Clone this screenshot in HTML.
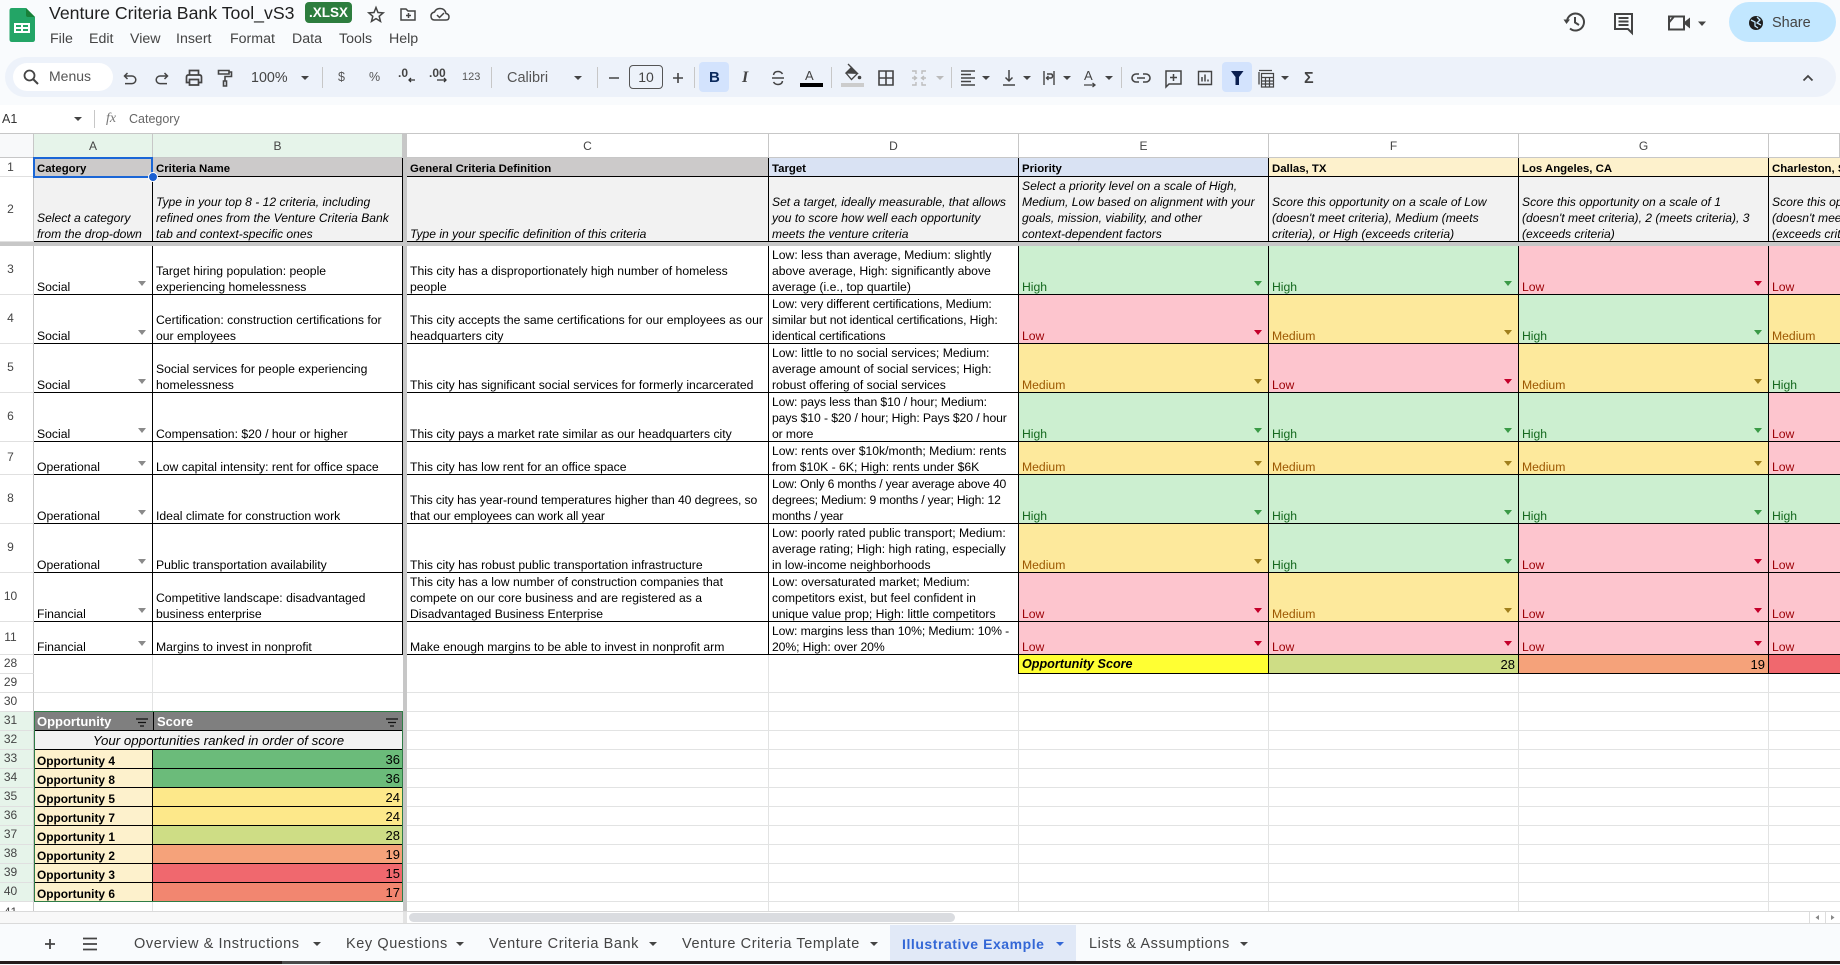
<!DOCTYPE html>
<html lang="en"><head><meta charset="utf-8"><title>Venture Criteria Bank Tool_vS3</title>
<style>
*{box-sizing:border-box}
html,body{margin:0;padding:0;width:1840px;height:964px;overflow:hidden;background:#f9fbfd;font-family:"Liberation Sans",Arial,sans-serif;color:#000}
.x{position:absolute;white-space:nowrap;color:#444}
.band{position:absolute;left:5px;top:57px;width:1831px;height:40px;background:#edf2fa;border-radius:20px}
.pill{position:absolute;left:13px;top:63px;width:100px;height:28px;background:#fff;border-radius:14px}
.hl{position:absolute;top:62px;width:30px;height:30px;background:#d3e3fd;border-radius:4px}
.sep{position:absolute;top:67px;width:1px;height:21px;background:#c7c7c7}
.t{position:absolute;width:0;height:0;border-left:4px solid transparent;border-right:4px solid transparent;border-top:4px solid #444}
.fbar{position:absolute;left:0;top:105px;width:1840px;height:28px;background:#fff}
.hd{position:absolute;top:133px;height:25px;background:#fff;border-top:1px solid #c7c7c7;border-bottom:1px solid #c7c7c7;border-right:1px solid #c7c7c7;text-align:center;font-size:12px;line-height:25px;color:#444}
.n{position:absolute;left:0;width:34px;background:#fff;border-right:1px solid #c7c7c7;border-bottom:1px solid #e0e0e0;font-size:12px;color:#444;overflow:hidden}
.n span{position:absolute;left:0;width:21px;text-align:center;top:50%;margin-top:-9px;line-height:16px}
.n.ng{background:#e6f4ea}
.r{position:absolute;left:34px;width:1806px;border-bottom:1px solid #000;overflow:hidden}
.c{position:absolute;top:0;bottom:0;border-right:1px solid #000;overflow:hidden;white-space:nowrap;font-size:12.2px;line-height:16px;background:#fff}
.c span{position:absolute;left:3px;bottom:-1px}
.a{left:0;width:119px}.b{left:119px;width:250px}.cc{left:373px;width:362px}.d{left:735px;width:250px}.e{left:985px;width:250px}.f{left:1235px;width:250px}.g{left:1485px;width:250px}.h{left:1735px;width:71px;border-right:0}
.c i{position:absolute;right:6px;bottom:8px;width:0;height:0;border-left:4px solid transparent;border-right:4px solid transparent;border-top:5px solid #8a8a8a}
.hi{background:#ccefd0;color:#15691f}.hi i{border-top-color:#3a9a46}
.lo{background:#fdc5ce;color:#9c0006}.lo i{border-top-color:#c4002a}
.me{background:#fde99c;color:#9c5700}.me i{border-top-color:#a07f1c}
.c.h i{display:none}
.h1 .c{background:#cccaca;font-weight:bold;font-size:11.4px}
.h1 .d,.h1 .e{background:#d9e2f3}
.h1 .f,.h1 .g,.h1 .h{background:#fdf1cc}
.h2 .c{background:#f2f2f2;font-style:italic;font-size:12.1px}
.gl{position:absolute;top:655px;width:1px;height:256px;background:#e2e3e3}
.grid{position:absolute;left:0;top:674px;width:1840px;height:237px;background:repeating-linear-gradient(to bottom,transparent 0,transparent 18px,#e2e3e3 18px,#e2e3e3 19px)}
.rk{position:absolute;left:34px;width:369px;height:19px;border-bottom:1px solid #000}
.rk div{position:absolute;top:0;bottom:0;white-space:nowrap}
.op{left:0;width:119px;background:#fdf1cc;border-right:1px solid #000;font-weight:bold;font-size:11.9px;line-height:16px}
.op span{position:absolute;left:3px;bottom:-1px}
.sc{left:119px;width:250px;text-align:right;font-size:13px;line-height:19px;padding-right:3px}
.tab{position:absolute;top:924px;font-size:14.5px;letter-spacing:.58px;line-height:41px;color:#444;white-space:nowrap}
</style></head><body>

<!-- title / menu -->
<div class="x" style="left:49px;top:2px;font-size:17.7px;line-height:22px;color:#1f1f1f">Venture Criteria Bank Tool_vS3</div>
<div class="x" style="left:305px;top:2px;width:47px;height:21px;background:#2d7d3e;border-radius:4px;color:#fff;font-size:13.5px;font-weight:bold;line-height:21px;text-align:center">.XLSX</div>
<div class="x" style="left:50px;top:30px;font-size:14.2px;line-height:18px">File</div>
<div class="x" style="left:89px;top:30px;font-size:14.2px;line-height:18px">Edit</div>
<div class="x" style="left:130px;top:30px;font-size:14.2px;line-height:18px">View</div>
<div class="x" style="left:176px;top:30px;font-size:14.2px;line-height:18px">Insert</div>
<div class="x" style="left:230px;top:30px;font-size:14.2px;line-height:18px">Format</div>
<div class="x" style="left:292px;top:30px;font-size:14.2px;line-height:18px">Data</div>
<div class="x" style="left:339px;top:30px;font-size:14.2px;line-height:18px">Tools</div>
<div class="x" style="left:389px;top:30px;font-size:14.2px;line-height:18px">Help</div>
<div class="x" style="left:1729px;top:2px;width:107px;height:40px;background:#c2e7ff;border-radius:20px"></div>
<div class="x" style="left:1772px;top:14px;font-size:14.5px;line-height:18px">Share</div>

<!-- toolbar -->
<div class="band"></div><div class="pill"></div>
<div class="hl" style="left:699px"></div><div class="hl" style="left:1222px"></div>
<div class="x" style="left:49px;top:68px;font-size:14px;line-height:16px;color:#555">Menus</div>
<div class="x" style="left:251px;top:70px;font-size:14.3px;line-height:17px">100%</div>
<div class="t" style="left:301px;top:76px"></div>
<div class="sep" style="left:322px"></div>
<div class="x" style="left:338px;top:69px;font-size:12.5px;line-height:16px;color:#555">$</div>
<div class="x" style="left:369px;top:69px;font-size:12.5px;line-height:16px;color:#555">%</div>
<div class="x" style="left:398px;top:66px;font-size:12px;font-weight:bold;line-height:14px">.0</div>
<div class="x" style="left:429px;top:66px;font-size:12px;font-weight:bold;line-height:14px">.00</div>
<div class="x" style="left:462px;top:70px;font-size:11px;line-height:14px;color:#555">123</div>
<div class="sep" style="left:491px"></div>
<div class="x" style="left:507px;top:69px;font-size:14.5px;line-height:18px;color:#555">Calibri</div>
<div class="t" style="left:574px;top:76px"></div>
<div class="sep" style="left:597px"></div>
<div class="x" style="left:629px;top:65px;width:34px;height:24px;border:1px solid #555;border-radius:4px;text-align:center;font-size:14px;line-height:22px">10</div>
<div class="sep" style="left:694px"></div>
<div class="sep" style="left:831px"></div>
<div class="x" style="left:841px;top:83px;width:23px;height:4px;background:#ccc"></div>
<div class="x" style="left:800px;top:83px;width:23px;height:4px;background:#000"></div>
<div class="x" style="left:805px;top:68px;font-size:13px;line-height:15px">A</div>
<div class="x" style="left:709px;top:69px;font-size:15px;font-weight:bold;line-height:17px;color:#0b2a5e">B</div>
<div class="x" style="left:742px;top:69px;font-size:16px;font-weight:bold;font-style:italic;line-height:17px;font-family:'Liberation Serif',serif">I</div>
<div class="sep" style="left:951px"></div>
<div class="sep" style="left:1121px"></div>
<div class="t" style="left:936px;top:76px;border-top-color:#bbb"></div>
<div class="t" style="left:982px;top:76px"></div>
<div class="t" style="left:1023px;top:76px"></div>
<div class="t" style="left:1063px;top:76px"></div>
<div class="t" style="left:1105px;top:76px"></div>
<div class="t" style="left:1281px;top:76px"></div>
<div class="x" style="left:1084px;top:69px;font-size:13px;line-height:14px">A</div>
<div class="x" style="left:1304px;top:70px;font-size:16px;font-weight:bold;line-height:18px">Σ</div>

<!-- formula bar -->
<div class="fbar"></div>
<div class="x" style="left:2px;top:111px;font-size:12.5px;line-height:16px;color:#333">A1</div>
<div class="t" style="left:74px;top:117px"></div>
<div class="x" style="left:94px;top:110px;width:1px;height:18px;background:#c7c7c7"></div>
<div class="x" style="left:106px;top:110px;font-size:14px;font-style:italic;font-family:'Liberation Serif',serif;line-height:18px;color:#777">fx</div>
<div class="x" style="left:129px;top:111px;font-size:12.5px;line-height:16px;color:#666">Category</div>

<!-- headers -->
<div class="hd" style="left:0;width:34px;background:#f8f9fa"></div>
<div class="hd" style="left:34px;width:119px;background:#e6f4ea">A</div>
<div class="hd" style="left:153px;width:250px;background:#e6f4ea">B</div>
<div class="hd" style="left:407px;width:362px">C</div>
<div class="hd" style="left:769px;width:250px">D</div>
<div class="hd" style="left:1019px;width:250px">E</div>
<div class="hd" style="left:1269px;width:250px">F</div>
<div class="hd" style="left:1519px;width:250px">G</div>
<div class="hd" style="left:1769px;width:71px"></div>
<div class="hd" style="left:403px;width:4px;background:#c7c7c7"></div>

<!-- row numbers -->
<div class="n" style="top:158px;height:19px"><span style="margin-top:-8px">1</span></div>
<div class="n" style="top:177px;height:65px"><span style="margin-top:-8px">2</span></div>
<div class="n" style="top:246px;height:49px"><span>3</span></div>
<div class="n" style="top:295px;height:49px"><span>4</span></div>
<div class="n" style="top:344px;height:49px"><span>5</span></div>
<div class="n" style="top:393px;height:49px"><span>6</span></div>
<div class="n" style="top:442px;height:33px"><span>7</span></div>
<div class="n" style="top:475px;height:49px"><span>8</span></div>
<div class="n" style="top:524px;height:49px"><span>9</span></div>
<div class="n" style="top:573px;height:49px"><span>10</span></div>
<div class="n" style="top:622px;height:33px"><span>11</span></div>
<div class="n" style="top:655px;height:19px"><span>28</span></div>
<div class="n" style="top:674px;height:19px"><span>29</span></div>
<div class="n" style="top:693px;height:19px"><span>30</span></div>
<div class="n ng" style="top:712px;height:19px"><span>31</span></div>
<div class="n ng" style="top:731px;height:19px"><span>32</span></div>
<div class="n ng" style="top:750px;height:19px"><span>33</span></div>
<div class="n ng" style="top:769px;height:19px"><span>34</span></div>
<div class="n ng" style="top:788px;height:19px"><span>35</span></div>
<div class="n ng" style="top:807px;height:19px"><span>36</span></div>
<div class="n ng" style="top:826px;height:19px"><span>37</span></div>
<div class="n ng" style="top:845px;height:19px"><span>38</span></div>
<div class="n ng" style="top:864px;height:19px"><span>39</span></div>
<div class="n ng" style="top:883px;height:19px"><span>40</span></div>
<div class="n" style="top:902px;height:9px;border-bottom:0"><span style="margin-top:-3px">41</span></div>

<!-- empty grid -->
<div style="position:absolute;left:34px;top:655px;width:1806px;height:256px;background:#fff"></div>
<div class="grid" style="left:34px;width:1806px"></div>
<div class="gl" style="left:152px"></div><div class="gl" style="left:768px"></div><div class="gl" style="left:1018px"></div><div class="gl" style="left:1268px"></div><div class="gl" style="left:1518px"></div><div class="gl" style="left:1768px"></div>

<!-- data -->
<div class="r h1" style="top:158px;height:19px">
<div class="c a"><span>Category</span></div><div class="c b"><span>Criteria Name</span></div><div class="c cc"><span>General Criteria Definition</span></div><div class="c d"><span>Target</span></div><div class="c e"><span>Priority</span></div><div class="c f"><span>Dallas, TX</span></div><div class="c g"><span>Los Angeles, CA</span></div><div class="c h"><span>Charleston, SC</span></div></div>
<div class="r h2" style="top:177px;height:65px">
<div class="c a"><span>Select a category<br>from the drop-down</span></div>
<div class="c b"><span>Type in your top 8 - 12 criteria, including<br>refined ones from the Venture Criteria Bank<br>tab and context-specific ones</span></div>
<div class="c cc"><span>Type in your specific definition of this criteria</span></div>
<div class="c d"><span>Set a target, ideally measurable, that allows<br>you to score how well each opportunity<br>meets the venture criteria</span></div>
<div class="c e"><span>Select a priority level on a scale of High,<br>Medium, Low based on alignment with your<br>goals, mission, viability, and other<br>context-dependent factors</span></div>
<div class="c f"><span>Score this opportunity on a scale of Low<br>(doesn't meet criteria), Medium (meets<br>criteria), or High (exceeds criteria)</span></div>
<div class="c g"><span>Score this opportunity on a scale of 1<br>(doesn't meet criteria), 2 (meets criteria), 3<br>(exceeds criteria)</span></div>
<div class="c h"><span>Score this opportunity on a scale of 1<br>(doesn't meet criteria), 2 (meets criteria), 3<br>(exceeds criteria)</span></div></div>

<div class="r" style="top:246px;height:49px">
<div class="c a"><span>Social</span><i></i></div><div class="c b"><span>Target hiring population: people<br>experiencing homelessness</span></div>
<div class="c cc"><span>This city has a disproportionately high number of homeless<br>people</span></div>
<div class="c d"><span>Low: less than average, Medium: slightly<br>above average, High: significantly above<br>average (i.e., top quartile)</span></div>
<div class="c e hi"><span>High</span><i></i></div><div class="c f hi"><span>High</span><i></i></div><div class="c g lo"><span>Low</span><i></i></div><div class="c h lo"><span>Low</span><i></i></div></div>

<div class="r" style="top:295px;height:49px">
<div class="c a"><span>Social</span><i></i></div><div class="c b"><span>Certification: construction certifications for<br>our employees</span></div>
<div class="c cc"><span>This city accepts the same certifications for our employees as our<br>headquarters city</span></div>
<div class="c d"><span style="letter-spacing:-.1px">Low: very different certifications, Medium:<br>similar but not identical certifications, High:<br>identical certifications</span></div>
<div class="c e lo"><span>Low</span><i></i></div><div class="c f me"><span>Medium</span><i></i></div><div class="c g hi"><span>High</span><i></i></div><div class="c h me"><span>Medium</span><i></i></div></div>

<div class="r" style="top:344px;height:49px">
<div class="c a"><span>Social</span><i></i></div><div class="c b"><span>Social services for people experiencing<br>homelessness</span></div>
<div class="c cc"><span>This city has significant social services for formerly incarcerated</span></div>
<div class="c d"><span>Low: little to no social services; Medium:<br>average amount of social services; High:<br>robust offering of social services</span></div>
<div class="c e me"><span>Medium</span><i></i></div><div class="c f lo"><span>Low</span><i></i></div><div class="c g me"><span>Medium</span><i></i></div><div class="c h hi"><span>High</span><i></i></div></div>

<div class="r" style="top:393px;height:49px">
<div class="c a"><span>Social</span><i></i></div><div class="c b"><span>Compensation: $20 / hour or higher</span></div>
<div class="c cc"><span>This city pays a market rate similar as our headquarters city</span></div>
<div class="c d"><span style="letter-spacing:-.1px">Low: pays less than $10 / hour; Medium:<br>pays $10 - $20 / hour; High: Pays $20 / hour<br>or more</span></div>
<div class="c e hi"><span>High</span><i></i></div><div class="c f hi"><span>High</span><i></i></div><div class="c g hi"><span>High</span><i></i></div><div class="c h lo"><span>Low</span><i></i></div></div>

<div class="r" style="top:442px;height:33px">
<div class="c a"><span>Operational</span><i></i></div><div class="c b"><span>Low capital intensity: rent for office space</span></div>
<div class="c cc"><span>This city has low rent for an office space</span></div>
<div class="c d"><span>Low: rents over $10k/month; Medium: rents<br>from $10K - 6K; High: rents under $6K</span></div>
<div class="c e me"><span>Medium</span><i></i></div><div class="c f me"><span>Medium</span><i></i></div><div class="c g me"><span>Medium</span><i></i></div><div class="c h lo"><span>Low</span><i></i></div></div>

<div class="r" style="top:475px;height:49px">
<div class="c a"><span>Operational</span><i></i></div><div class="c b"><span>Ideal climate for construction work</span></div>
<div class="c cc"><span style="letter-spacing:-.1px">This city has year-round temperatures higher than 40 degrees, so<br>that our employees can work all year</span></div>
<div class="c d"><span style="letter-spacing:-.2px">Low: Only 6 months / year average above 40<br>degrees; Medium: 9 months / year; High: 12<br>months / year</span></div>
<div class="c e hi"><span>High</span><i></i></div><div class="c f hi"><span>High</span><i></i></div><div class="c g hi"><span>High</span><i></i></div><div class="c h hi"><span>High</span><i></i></div></div>

<div class="r" style="top:524px;height:49px">
<div class="c a"><span>Operational</span><i></i></div><div class="c b"><span>Public transportation availability</span></div>
<div class="c cc"><span>This city has robust public transportation infrastructure</span></div>
<div class="c d"><span>Low: poorly rated public transport; Medium:<br>average rating; High: high rating, especially<br>in low-income neighborhoods</span></div>
<div class="c e me"><span>Medium</span><i></i></div><div class="c f hi"><span>High</span><i></i></div><div class="c g lo"><span>Low</span><i></i></div><div class="c h lo"><span>Low</span><i></i></div></div>

<div class="r" style="top:573px;height:49px">
<div class="c a"><span>Financial</span><i></i></div><div class="c b"><span>Competitive landscape: disadvantaged<br>business enterprise</span></div>
<div class="c cc"><span>This city has a low number of construction companies that<br>compete on our core business and are registered as a<br>Disadvantaged Business Enterprise</span></div>
<div class="c d"><span>Low: oversaturated market; Medium:<br>competitors exist, but feel confident in<br>unique value prop; High: little competitors</span></div>
<div class="c e lo"><span>Low</span><i></i></div><div class="c f me"><span>Medium</span><i></i></div><div class="c g lo"><span>Low</span><i></i></div><div class="c h lo"><span>Low</span><i></i></div></div>

<div class="r" style="top:622px;height:33px">
<div class="c a"><span>Financial</span><i></i></div><div class="c b"><span>Margins to invest in nonprofit</span></div>
<div class="c cc"><span>Make enough margins to be able to invest in nonprofit arm</span></div>
<div class="c d"><span style="letter-spacing:-.1px">Low: margins less than 10%; Medium: 10% -<br>20%; High: over 20%</span></div>
<div class="c e lo"><span>Low</span><i></i></div><div class="c f lo"><span>Low</span><i></i></div><div class="c g lo"><span>Low</span><i></i></div><div class="c h lo"><span>Low</span><i></i></div></div>

<!-- opportunity score row -->
<div class="x" style="left:1018px;top:655px;width:251px;height:19px;background:#ffff33;border-left:1px solid #000;border-right:1px solid #000;border-bottom:1px solid #000;color:#000;font-weight:bold;font-style:italic;font-size:12.6px;line-height:18px;padding-left:3px">Opportunity Score</div>
<div class="x" style="left:1269px;top:655px;width:250px;height:19px;background:#cedd85;border-right:1px solid #000;border-bottom:1px solid #000;color:#000;font-size:13px;line-height:19px;text-align:right;padding-right:3px">28</div>
<div class="x" style="left:1519px;top:655px;width:250px;height:19px;background:#f5a27a;border-right:1px solid #000;border-bottom:1px solid #000;color:#000;font-size:13px;line-height:19px;text-align:right;padding-right:3px">19</div>
<div class="x" style="left:1769px;top:655px;width:71px;height:19px;background:#f0686e;border-bottom:1px solid #000"></div>

<!-- ranking table -->
<div class="rk" style="top:712px;background:#7f7f7f;color:#fff;font-weight:bold;font-size:13px;line-height:19px"><div style="left:3px;width:116px">Opportunity</div><div style="left:119px;width:1px;background:#000"></div><div style="left:123px">Score</div></div>
<div class="rk" style="top:731px;background:#f2f2f2;text-align:center;font-style:italic;font-size:13.3px;line-height:19px">Your opportunities ranked in order of score</div>
<div class="rk" style="top:750px"><div class="op"><span>Opportunity 4</span></div><div class="sc" style="background:#6bbb7a">36</div></div>
<div class="rk" style="top:769px"><div class="op"><span>Opportunity 8</span></div><div class="sc" style="background:#6bbb7a">36</div></div>
<div class="rk" style="top:788px"><div class="op"><span>Opportunity 5</span></div><div class="sc" style="background:#fde88a">24</div></div>
<div class="rk" style="top:807px"><div class="op"><span>Opportunity 7</span></div><div class="sc" style="background:#fde88a">24</div></div>
<div class="rk" style="top:826px"><div class="op"><span>Opportunity 1</span></div><div class="sc" style="background:#cedd85">28</div></div>
<div class="rk" style="top:845px"><div class="op"><span>Opportunity 2</span></div><div class="sc" style="background:#f5a27a">19</div></div>
<div class="rk" style="top:864px"><div class="op"><span>Opportunity 3</span></div><div class="sc" style="background:#f0686e">15</div></div>
<div class="rk" style="top:883px"><div class="op"><span>Opportunity 6</span></div><div class="sc" style="background:#f28670">17</div></div>
<div style="position:absolute;left:34px;top:711px;width:369px;height:191px;border:1px solid #2e7d46"></div>

<!-- freeze bars -->
<div style="position:absolute;left:0;top:242px;width:1840px;height:4px;background:#c7c7c7"></div>
<div style="position:absolute;left:403px;top:158px;width:4px;height:765px;background:#c7c7c7"></div>

<!-- selection -->
<div style="position:absolute;left:33px;top:157px;width:120px;height:21px;border:2px solid #1a66d6"></div>
<div style="position:absolute;left:148px;top:172px;width:10px;height:10px;border-radius:50%;background:#1a5fd0;border:1px solid #fff"></div>

<!-- scroll band -->
<div style="position:absolute;left:0;top:911px;width:1840px;height:13px;background:#fff;border-top:1px solid #dadada;border-bottom:1px solid #dadada"></div>
<div style="position:absolute;left:0;top:912px;width:403px;height:11px;background:#f8f8f8"></div>
<div style="position:absolute;left:403px;top:912px;width:4px;height:11px;background:#e3e3e3"></div>
<div style="position:absolute;left:409px;top:913px;width:546px;height:9px;border-radius:5px;background:#dadce0"></div>
<div style="position:absolute;left:1809px;top:912px;width:1px;height:11px;background:#ddd"></div>
<div style="position:absolute;left:1825px;top:912px;width:1px;height:11px;background:#ddd"></div>

<!-- tabs -->
<div style="position:absolute;left:0;top:924px;width:1840px;height:37px;background:#f9fbfd"></div>
<div style="position:absolute;left:890px;top:925px;width:186px;height:36px;background:#e1e9f7"></div>
<div class="tab" style="left:134px">Overview &amp; Instructions</div><div class="t" style="left:313px;top:942px"></div>
<div class="tab" style="left:346px">Key Questions</div><div class="t" style="left:456px;top:942px"></div>
<div class="tab" style="left:489px">Venture Criteria Bank</div><div class="t" style="left:649px;top:942px"></div>
<div class="tab" style="left:682px">Venture Criteria Template</div><div class="t" style="left:870px;top:942px"></div>
<div class="tab" style="left:902px;color:#3367d6;font-weight:bold;font-size:14px;letter-spacing:.55px">Illustrative Example</div><div class="t" style="left:1056px;top:942px;border-top-color:#3367d6"></div>
<div class="tab" style="left:1089px">Lists &amp; Assumptions</div><div class="t" style="left:1240px;top:942px"></div>
<div style="position:absolute;left:0;top:961px;width:1840px;height:3px;background:#241c1c"></div>
<div style="position:absolute;left:282px;top:961px;width:48px;height:3px;background:#4a4a4a"></div>

<!-- icons -->
<svg width="1840" height="964" viewBox="0 0 1840 964" style="position:absolute;left:0;top:0;pointer-events:none" fill="none" stroke="#444" stroke-width="1.5">
<!-- logo -->
<path d="M12 8H26L35 17V39.500Q35 42 32.500 42H12Q9.500 42 9.500 39.500V10.500Q9.500 8 12 8Z" fill="#23a566" stroke="none"/>
<path d="M26 8L35 17H28Q26 17 26 15Z" fill="#188038" stroke="none"/>
<path d="M14 23H30V33H14Z" fill="#fff" stroke="none"/>
<path d="M16 25H21V27H16ZM23 25H28V27H23ZM16 29H21V31H16ZM23 29H28V31H23Z" fill="#23a566" stroke="none"/>
<!-- star, folder, cloud -->
<path d="M376 7.500L378 12.500L383.200 12.900L379.200 16.300L380.500 21.400L376 18.600L371.500 21.400L372.800 16.300L368.800 12.900L374 12.500Z"/>
<path d="M401 9H406L408 11H415V20H401Z"/><path d="M406 15.500H411M408.500 13V18"/>
<path d="M434.500 20H446Q449 20 449 17Q449 14 446 13.500Q445 8.500 440 8.500Q436 8.500 434.500 12Q431 12.800 431 16Q431 20 434.500 20Z"/><path d="M437 15L439.500 17.500L444 13"/>
<!-- right icons -->
<path d="M1567 22A8.500 8.500 0 1 1 1570 28.500" stroke-width="2"/><path d="M1563.500 19.500H1570L1566.500 24Z" fill="#444" stroke="none"/><path d="M1575 17V22.500L1579 25" stroke-width="2"/>
<path d="M1615 16H1632V35L1628 31H1615Z M1618.500 20H1628.500M1618.500 23.500H1628.500M1618.500 27H1628.500" stroke-width="2" transform="translate(0,-2)"/>
<path d="M1669 19H1684V32H1669Q1669 32 1669 32Z M1669 25L1674 19" stroke-width="2" transform="translate(0,-2.500)"/><path d="M1685 24L1690 20V31L1685 27Z" fill="#444" stroke="none" transform="translate(0,-2.500)"/>
<path d="M1698 21.500H1706L1702 26Z" fill="#444" stroke="none"/>
<circle cx="1756" cy="23" r="7" fill="#1f1f1f" stroke="none"/><path d="M1751 20L1755 22V26L1758 28M1757 17L1760 20L1757 23L1761 25" stroke="#c2e7ff" stroke-width="1.300"/>
<!-- magnifier -->
<circle cx="29.500" cy="75.500" r="5" stroke-width="1.800"/><path d="M33 79L38 84" stroke-width="2"/>
<!-- undo redo print paint -->
<g transform="translate(130,79)"><path d="M-2.500 -6L-5.500 -3L-2.500 0M-5.500 -3H2A3.800 3.800 0 0 1 2 4.600H-5"/></g>
<g transform="translate(162,79) scale(-1,1)"><path d="M-2.500 -6L-5.500 -3L-2.500 0M-5.500 -3H2A3.800 3.800 0 0 1 2 4.600H-5"/></g>
<g transform="translate(194,78)" stroke-width="1.700"><path d="M-4.500 -3V-7.500H4.500V-3M-4.500 4.500H-7.500V-1Q-7.500 -3 -5.500 -3H5.500Q7.500 -3 7.500 -1V4.500H4.500M-4.500 1.500H4.500V7H-4.500Z"/></g>
<g transform="translate(225,78)" stroke-width="1.600"><path d="M-6.500 -7.500H4V-4H-6.500ZM4 -6H6.500V-1.500H0V3M-1.500 3H1.500V8H-1.500Z"/></g>
<!-- decimals arrows -->
<path d="M409 80H415M411 78L409 80L411 82" stroke="#333" stroke-width="1.300"/><path d="M437 80H446M444 78L446 80L444 82" stroke="#333" stroke-width="1.300"/>
<!-- minus plus -->
<path d="M609 78H619M673 78H683M678 73V83" stroke-width="1.600"/>
<!-- strike -->
<path d="M772 78H784M773.500 75Q774 71.500 778 71.500Q781 71.500 782.500 74M782.500 81Q782 84.500 778 84.500Q775 84.500 773.500 82" stroke-width="1.500"/>
<!-- fill bucket -->
<path d="M846 73L851.500 67.500L857.500 73.500Z" fill="#444" stroke="#444" stroke-width="1"/><path d="M846 73L851.500 67.500L857.500 73.500L851.500 79.500Z" stroke-width="1.300"/><path d="M848 64L852 68" stroke-width="1.300"/><circle cx="859.500" cy="77.500" r="1.800" fill="#444" stroke="none"/>
<!-- borders -->
<path d="M879 71H893V85H879ZM886 71V85M879 78H893" stroke-width="1.600"/>
<!-- merge -->
<path d="M912 71H916V74M926 71H922V74M912 85H916V82M926 85H922V82M912 78H916M926 78H922M914 76L916.500 78L914 80M924 76L921.500 78L924 80" stroke="#bdbdbd" stroke-width="1.400"/>
<!-- align -->
<path d="M961 71H975M961 74.500H971M961 78H975M961 81.500H971M961 85H975" stroke-width="1.400"/>
<!-- valign -->
<path d="M1003 85H1015M1009 70V81M1005.500 77.500L1009 81L1012.500 77.500" stroke-width="1.500"/>
<!-- wrap -->
<path d="M1044 71V85M1054 71V85M1046 78H1051Q1052.500 78 1052.500 76Q1052.500 74 1051 74H1047M1048.500 76L1046.500 78L1048.500 80" stroke-width="1.400"/>
<!-- rotate underline -->
<path d="M1084 85H1094M1092.500 83L1095 85L1092.500 87" stroke-width="1.300"/>
<!-- link -->
<path d="M1139 74H1136A4 4 0 0 0 1136 82H1139M1143 74H1146A4 4 0 0 1 1146 82H1143M1137 78H1145" stroke-width="1.600"/>
<!-- comment -->
<path d="M1166 71H1181V84H1169L1166 87ZM1173.500 74V81M1170 77.500H1177" stroke-width="1.500"/>
<!-- chart -->
<path d="M1198.500 71.500H1211.500V84.500H1198.500Z" stroke-width="1.400"/><path d="M1202 81.500V77M1205 81.500V74.500M1208 81.500V79.500" stroke-width="1.500"/>
<!-- filter -->
<path d="M1231 71H1243.500L1239 77V85H1235.500V77Z" fill="#0b1f4f" stroke="none"/>
<!-- functions -->
<path d="M1261 72V84.500M1261 70.500H1274" stroke-width="1.300" transform="translate(-2,0)"/><path d="M1261.500 73.500H1273.500V87H1261.500ZM1261.500 77.500H1273.500M1261.500 81H1273.500M1261.500 84H1273.500M1265.500 77.500V87M1269.500 77.500V87" stroke-width="1.200"/>
<!-- collapse -->
<path d="M1803.500 80.500L1808 76L1812.500 80.500" stroke-width="1.800"/>
<!-- ranking filters -->
<path d="M136 719H148M138 722.500H146M140 726H144" stroke="#111" stroke-width="1.300"/>
<path d="M386 719H398M388 722.500H396M390 726H394" stroke="#111" stroke-width="1.300"/>
<!-- scroll buttons -->
<path d="M1819 915V920L1815.500 917.500Z" fill="#888" stroke="none"/><path d="M1831 915V920L1834.500 917.500Z" fill="#888" stroke="none"/>
<!-- tabs + menu -->
<path d="M45 944H55M50 939V949" stroke-width="1.800"/>
<path d="M83 938.500H97M83 944H97M83 949.500H97" stroke-width="1.800"/>
</svg>
</body></html>
